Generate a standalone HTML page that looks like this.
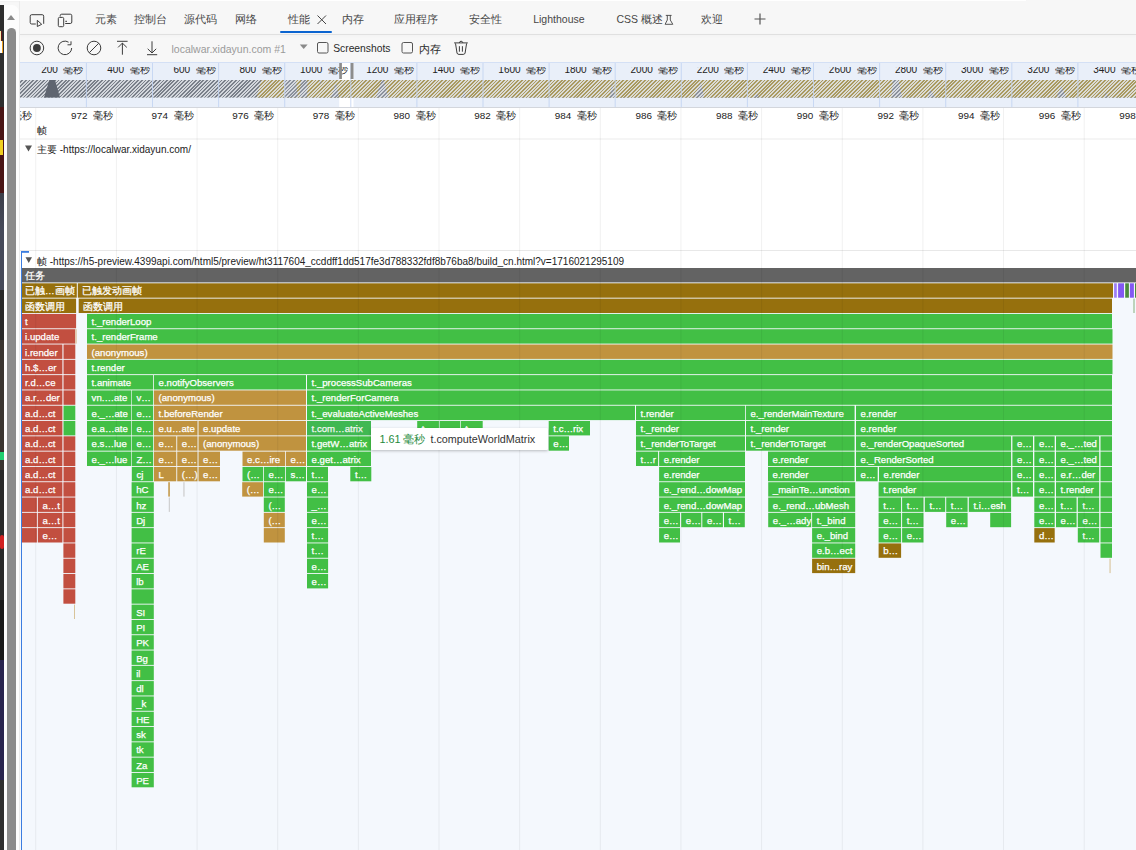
<!DOCTYPE html>
<html><head><meta charset="utf-8"><style>
*{box-sizing:border-box}
body{margin:0;width:1136px;height:850px;overflow:hidden;position:relative;background:#f7f7f7;font-family:"Liberation Sans",sans-serif}
.a{position:absolute}
.tab{position:absolute;top:12.2px;font-size:10.5px;color:#474747;line-height:14px;white-space:nowrap}
</style></head><body>
<div class="a" style="left:0;top:0;width:1026px;height:1.3px;background:#fff;box-shadow:0 0.5px 1.5px rgba(0,0,0,0.05)"></div>
<div class="a" style="left:0;top:5px;width:3.8px;height:845px;background:linear-gradient(#2e2e2e 0,#2e2e2e 102px,#4a1515 102px,#4a1515 188px,#3d3f4a 188px,#464a5a 225px,#464a5a 285px,#2a2a2a 285px,#2a2a2a 335px,#3a3530 335px,#3a3530 465px,#2a2a2a 465px,#2a2a2a 595px,#1a1a1a 595px,#1a1a1a 655px,#2a2550 655px,#2a2550 775px,#2e2e2e 775px)"></div>
<div class="a" style="left:0;top:140px;width:3px;height:15px;background:#f0d020"></div>
<div class="a" style="left:0;top:31px;width:2px;height:9.5px;background:#fdf0b0;border-right:1.2px solid #6a1a1a"></div>
<div class="a" style="left:0;top:41px;width:3px;height:12px;background:linear-gradient(90deg,#fff 0,#fff 1.8px,#f0a020 1.8px)"></div>
<div class="a" style="left:0;top:452px;width:3.8px;height:8px;background:#20d070"></div>
<div class="a" style="left:0;top:535px;width:3.5px;height:14px;background:#d02020;border-radius:2px"></div>
<div class="a" style="left:3.8px;top:4.6px;width:15.4px;height:846px;background:#fdfdfd;border-top-right-radius:7px"></div>
<div class="a" style="left:6.7px;top:14.8px;width:0;height:0;border-left:4.75px solid transparent;border-right:4.75px solid transparent;border-bottom:5.3px solid #8a8a8a"></div>
<div class="a" style="left:7px;top:28px;width:9px;height:830px;background:#8b8b8b;border-radius:4.5px 4.5px 0 0"></div>
<div class="a" style="left:19px;top:1.3px;width:1117px;height:848.7px;background:#f7f7f7;border-left:1px solid #ebebeb"></div>
<!-- tab bar -->
<div class="a" style="left:20px;top:33.5px;width:1116px;height:1px;background:#e0e0e0;box-shadow:0 1px 3px rgba(0,0,0,0.05)"></div>
<span class="tab" style="left:94.6px">元素</span>
<span class="tab" style="left:134.2px">控制台</span>
<span class="tab" style="left:184.4px">源代码</span>
<span class="tab" style="left:234.7px">网络</span>
<span class="tab" style="left:288.4px">性能</span>
<span class="tab" style="left:342.1px">内存</span>
<span class="tab" style="left:394px">应用程序</span>
<span class="tab" style="left:468.5px">安全性</span>
<span class="tab" style="left:533.2px">Lighthouse</span>
<span class="tab" style="left:616.5px">CSS 概述</span>
<span class="tab" style="left:700.5px">欢迎</span>
<div class="a" style="left:279.6px;top:31px;width:52.8px;height:2px;background:#0b64d0;border-radius:1px"></div>
<svg class="a" style="left:0;top:0" width="800" height="62" fill="none" stroke="#3c3c3c" stroke-width="1">
 <path d="M35.8 24 H31.7 a1.5 1.5 0 0 1 -1.5 -1.5 V16.2 a1.5 1.5 0 0 1 1.5 -1.5 H42.2 a1.5 1.5 0 0 1 1.5 1.5 V23.8"/>
 <path d="M37.3 20.3 L37.3 26.5 L41.7 24.3 Z" stroke-linejoin="round"/>
 <rect x="58.3" y="17.4" width="5.4" height="9.3" rx="1.2"/>
 <path d="M60.2 16.5 V15.7 a1.5 1.5 0 0 1 1.5 -1.5 H70.3 a1.5 1.5 0 0 1 1.5 1.5 V22 a1.5 1.5 0 0 1 -1.5 1.5 H65.2"/><path d="M65.3 21.3 H67"/>
 <path d="M317.5 15.5 L326 24 M326 15.5 L317.5 24" stroke="#444" stroke-width="1"/>
 <path d="M665.8 15.4 H671.6 M667.3 15.4 V20 L665.1 24.3 H672.8 L670.3 20 V15.4" stroke="#444" stroke-width="0.9"/>
 <path d="M754.5 19 H765.5 M760 13.5 V24.5" stroke="#555" stroke-width="1.2"/>
 <!-- toolbar -->
 <circle cx="36.9" cy="48" r="6.8"/><circle cx="36.9" cy="48" r="3.9" fill="#3c3c3c" stroke="none"/>
 <path d="M71.7 48 A6.8 6.8 0 1 1 68.6 42.2"/><path d="M71 41.3 V44.8 H67.5"/>
 <circle cx="94" cy="48" r="6.8"/><path d="M89.3 52.7 L98.7 43.3"/>
 <path d="M117 41.3 H127.6 M122.4 43 V54.7 M118.1 47.4 L122.4 43.1 L126.8 47.4"/>
 <path d="M147 54.7 H157.2 M152 41.3 V52.8 M147.7 48.8 L152 53 L156.2 48.8"/>
 <path d="M299.8 44.5 H307.6 L303.7 49 Z" fill="#8a8a8a" stroke="none"/>
 <rect x="317.5" y="42.5" width="10.5" height="10.5" rx="1.5" stroke="#555"/>
 <rect x="402" y="42.5" width="10.5" height="10.5" rx="1.5" stroke="#555"/>
 <path d="M454.1 42.9 H467.8 M459.3 42.9 A1.85 2.2 0 0 1 462.9 42.9 M455.5 43.4 L457 53 Q457.3 54.4 459 54.4 H463.2 Q464.8 54.4 465.1 53 L466.6 43.4 M459.4 46.2 V51.7 M462.4 46.2 V51.7"/>
</svg>
<span class="a" style="left:171.5px;top:41.6px;font-size:10.5px;color:#9a9a9a;line-height:14px;white-space:nowrap">localwar.xidayun.com #1</span>
<span class="a" style="left:333.2px;top:41.6px;font-size:10.3px;color:#2a2a2a;line-height:14px;white-space:nowrap">Screenshots</span>
<span class="a" style="left:418.6px;top:41.6px;font-size:10.8px;color:#2a2a2a;line-height:14px;white-space:nowrap">内存</span>
<!-- overview -->
<div class="a" style="left:20px;top:62px;width:1116px;height:46px;background:#e9eff9;border-top:1px solid #d4e0f5;border-bottom:1.5px solid #d3d6dc"></div>
<div class="a" style="left:20px;top:108px;width:1116px;height:742px;background:#fff"></div>
<svg class="a" style="left:0;top:0" width="1136" height="108">
 <rect x="339.2" y="63" width="14.3" height="17" fill="#fff"/><rect x="339.2" y="97.6" width="14.3" height="9.4" fill="#fff"/>
 <rect x="20" y="80" width="1116" height="17.6" fill="#7a808a"/>
 <path d="M261.3 80 H1136 V97.6 H256.6 Z" fill="#a99a60"/>
 <path fill="#8b919c" d="M283.5 80 L296 80 L298 97.6 L285 97.6 Z M301 80 L307.3 80 L307.3 97.6 L299.4 97.6 Z M319 80 L322 80 L320.5 84 Z M331 97.6 L336 82 L339 97.6 Z M375.8 97.6 L381.7 80 L383.6 80 L388.4 97.6 Z M462 97.6 L464 90 L466 97.6 Z M609.8 97.6 L612 82 L615 97.6 Z M694 97.6 L701 82 L704 97.6 Z M754 97.6 L756.5 93 L759 97.6 Z M892.7 80 L898.5 80 L902.2 97.6 L891.4 97.6 Z M927.5 97.6 L930.2 89 L935 97.6 Z M1056.5 97.6 L1061 86 L1066.6 97.6 Z M1104 97.6 L1106 92 L1108 97.6 Z"/>
</svg>
<div class="a" style="left:20px;top:80px;width:1116px;height:17.6px;background:repeating-linear-gradient(135deg,rgba(230,233,238,0.82) 0,rgba(230,233,238,0.82) 1.35px,transparent 1.35px,transparent 2.56px)"></div>
<svg class="a" style="left:0;top:0" width="1136" height="850">
 <defs>
  <clipPath id="txclip"><rect x="20" y="67.1" width="1116" height="40"/></clipPath><clipPath id="rclip"><rect x="20" y="100" width="1116" height="40"/></clipPath>
 </defs>
 <rect x="85.9" y="63" width="1" height="44" fill="#c2d4f2" fill-opacity="0.85"/><rect x="152" y="63" width="1" height="44" fill="#c2d4f2" fill-opacity="0.85"/><rect x="218.1" y="63" width="1" height="44" fill="#c2d4f2" fill-opacity="0.85"/><rect x="284.2" y="63" width="1" height="44" fill="#c2d4f2" fill-opacity="0.85"/><rect x="350.3" y="63" width="1" height="44" fill="#c2d4f2" fill-opacity="0.85"/><rect x="416.4" y="63" width="1" height="44" fill="#c2d4f2" fill-opacity="0.85"/><rect x="482.5" y="63" width="1" height="44" fill="#c2d4f2" fill-opacity="0.85"/><rect x="548.6" y="63" width="1" height="44" fill="#c2d4f2" fill-opacity="0.85"/><rect x="614.7" y="63" width="1" height="44" fill="#c2d4f2" fill-opacity="0.85"/><rect x="680.8" y="63" width="1" height="44" fill="#c2d4f2" fill-opacity="0.85"/><rect x="746.9" y="63" width="1" height="44" fill="#c2d4f2" fill-opacity="0.85"/><rect x="813" y="63" width="1" height="44" fill="#c2d4f2" fill-opacity="0.85"/><rect x="879.1" y="63" width="1" height="44" fill="#c2d4f2" fill-opacity="0.85"/><rect x="945.2" y="63" width="1" height="44" fill="#c2d4f2" fill-opacity="0.85"/><rect x="1011.3" y="63" width="1" height="44" fill="#c2d4f2" fill-opacity="0.85"/><rect x="1077.4" y="63" width="1" height="44" fill="#c2d4f2" fill-opacity="0.85"/><rect x="1143.5" y="63" width="1" height="44" fill="#c2d4f2" fill-opacity="0.85"/>
 <path d="M44 97.6 L49.3 80 L55 80 L60 97.6 Z" fill="#5f6570"/>
 <g clip-path="url(#txclip)" font-family="Liberation Sans, sans-serif" font-size="10" fill="#222"><text x="83.4" y="73.4" text-anchor="end">200<tspan dx="5.5">毫秒</tspan></text><text x="149.5" y="73.4" text-anchor="end">400<tspan dx="5.5">毫秒</tspan></text><text x="215.6" y="73.4" text-anchor="end">600<tspan dx="5.5">毫秒</tspan></text><text x="281.7" y="73.4" text-anchor="end">800<tspan dx="5.5">毫秒</tspan></text><text x="347.8" y="73.4" text-anchor="end">1000<tspan dx="5.5">毫秒</tspan></text><text x="413.9" y="73.4" text-anchor="end">1200<tspan dx="5.5">毫秒</tspan></text><text x="480" y="73.4" text-anchor="end">1400<tspan dx="5.5">毫秒</tspan></text><text x="546.1" y="73.4" text-anchor="end">1600<tspan dx="5.5">毫秒</tspan></text><text x="612.2" y="73.4" text-anchor="end">1800<tspan dx="5.5">毫秒</tspan></text><text x="678.3" y="73.4" text-anchor="end">2000<tspan dx="5.5">毫秒</tspan></text><text x="744.4" y="73.4" text-anchor="end">2200<tspan dx="5.5">毫秒</tspan></text><text x="810.5" y="73.4" text-anchor="end">2400<tspan dx="5.5">毫秒</tspan></text><text x="876.6" y="73.4" text-anchor="end">2600<tspan dx="5.5">毫秒</tspan></text><text x="942.7" y="73.4" text-anchor="end">2800<tspan dx="5.5">毫秒</tspan></text><text x="1008.8" y="73.4" text-anchor="end">3000<tspan dx="5.5">毫秒</tspan></text><text x="1074.9" y="73.4" text-anchor="end">3200<tspan dx="5.5">毫秒</tspan></text><text x="1141" y="73.4" text-anchor="end">3400<tspan dx="5.5">毫秒</tspan></text></g>
 <rect x="339.2" y="63" width="2.7" height="16" fill="#8c8c8c"/>
 <rect x="350.6" y="63" width="2.9" height="16" fill="#8c8c8c"/>
 <g clip-path="url(#rclip)" font-family="Liberation Sans, sans-serif" font-size="9.9" fill="#222"><text x="32.25" y="118.5" text-anchor="end">970<tspan dx="5.5">毫秒</tspan></text><text x="112.9" y="118.5" text-anchor="end">972<tspan dx="5.5">毫秒</tspan></text><text x="193.55" y="118.5" text-anchor="end">974<tspan dx="5.5">毫秒</tspan></text><text x="274.2" y="118.5" text-anchor="end">976<tspan dx="5.5">毫秒</tspan></text><text x="354.85" y="118.5" text-anchor="end">978<tspan dx="5.5">毫秒</tspan></text><text x="435.5" y="118.5" text-anchor="end">980<tspan dx="5.5">毫秒</tspan></text><text x="516.15" y="118.5" text-anchor="end">982<tspan dx="5.5">毫秒</tspan></text><text x="596.8" y="118.5" text-anchor="end">984<tspan dx="5.5">毫秒</tspan></text><text x="677.45" y="118.5" text-anchor="end">986<tspan dx="5.5">毫秒</tspan></text><text x="758.1" y="118.5" text-anchor="end">988<tspan dx="5.5">毫秒</tspan></text><text x="838.75" y="118.5" text-anchor="end">990<tspan dx="5.5">毫秒</tspan></text><text x="919.4" y="118.5" text-anchor="end">992<tspan dx="5.5">毫秒</tspan></text><text x="1000.05" y="118.5" text-anchor="end">994<tspan dx="5.5">毫秒</tspan></text><text x="1080.7" y="118.5" text-anchor="end">996<tspan dx="5.5">毫秒</tspan></text><text x="1161.35" y="118.5" text-anchor="end">998<tspan dx="5.5">毫秒</tspan></text></g>
 <text x="37" y="133.5" font-family="Liberation Sans, sans-serif" font-size="10" fill="#222">帧</text>
 <rect x="20" y="138.5" width="1116" height="1" fill="#ececec"/>
 <path d="M25 145.5 H32 L28.5 151.5 Z" fill="#555"/>
 <text x="37" y="153" font-family="Liberation Sans, sans-serif" font-size="10" fill="#222">主要 -https://localwar.xidayun.com/</text>
 <rect x="20" y="250" width="1116" height="1" fill="#e8e8e8"/>
 <rect x="20" y="268" width="1116" height="582" fill="#f4f8fd"/>
 <path d="M25.5 257.2 H32 L28.75 263 Z" fill="#555"/>
 <text x="37" y="264.7" font-family="Liberation Sans, sans-serif" font-size="10" fill="#222">帧 -https://h5-preview.4399api.com/html5/preview/ht3117604_ccddff1dd517fe3d788332fdf8b76ba8/build_cn.html?v=1716021295109</text>
 <rect x="21" y="251" width="1" height="599" fill="#3b7de0"/>
 <rect x="21" y="251" width="8" height="1.8" fill="#3b7de0"/>
</svg>
<svg width="1136" height="850" style="position:absolute;left:0;top:0">
<g><rect x="22" y="268" width="1114" height="14.4" fill="#636363"/><rect x="22" y="283.3" width="54.8" height="14.4" fill="#96700d"/><rect x="77.8" y="283.3" width="1035.2" height="14.4" fill="#96700d"/><rect x="1114.1" y="283.3" width="2.7" height="14.4" fill="#9d7ef5"/><rect x="1118.1" y="283.3" width="5.9" height="14.4" fill="#8358f2"/><rect x="1125.2" y="283.3" width="3.7" height="14.4" fill="#4d8c3c"/><rect x="1129.9" y="283.3" width="4" height="14.4" fill="#8358f2"/><rect x="1135" y="283.3" width="1" height="14.4" fill="#4d8c3c"/><rect x="22" y="298.6" width="54.1" height="14.4" fill="#96700d"/><rect x="78.7" y="298.6" width="1033.3" height="14.4" fill="#96700d"/><rect x="1133.3" y="298.6" width="1.4" height="14.4" fill="#a5c4a0"/><rect x="22" y="313.9" width="54.1" height="14.4" fill="#c24f40"/><rect x="87" y="313.9" width="1025" height="14.4" fill="#42bf45"/><rect x="22" y="329.2" width="53.3" height="14.4" fill="#c24f40"/><rect x="75.3" y="329.2" width="1.5" height="14.4" fill="#e0c8a8"/><rect x="87" y="329.2" width="1025.5" height="14.4" fill="#42bf45"/><rect x="22" y="344.5" width="40.4" height="14.4" fill="#c24f40"/><rect x="63.5" y="344.5" width="11.8" height="14.4" fill="#c24f40"/><rect x="87" y="344.5" width="1025.5" height="14.4" fill="#c0933f"/><rect x="22" y="359.8" width="40.4" height="14.4" fill="#c24f40"/><rect x="63.5" y="359.8" width="11.8" height="14.4" fill="#c24f40"/><rect x="87" y="359.8" width="1025.5" height="14.4" fill="#42bf45"/><rect x="22" y="375.1" width="40.4" height="14.4" fill="#c24f40"/><rect x="63.5" y="375.1" width="11.8" height="14.4" fill="#c24f40"/><rect x="87" y="375.1" width="66.2" height="14.4" fill="#42bf45"/><rect x="154" y="375.1" width="152" height="14.4" fill="#42bf45"/><rect x="307" y="375.1" width="805" height="14.4" fill="#42bf45"/><rect x="22" y="390.4" width="40.4" height="14.4" fill="#c24f40"/><rect x="63.5" y="390.4" width="11.8" height="14.4" fill="#c24f40"/><rect x="87" y="390.4" width="44.2" height="14.4" fill="#42bf45"/><rect x="131.8" y="390.4" width="21.4" height="14.4" fill="#42bf45"/><rect x="154" y="390.4" width="152" height="14.4" fill="#c0933f"/><rect x="307" y="390.4" width="805" height="14.4" fill="#42bf45"/><rect x="22" y="405.7" width="40.4" height="14.4" fill="#c24f40"/><rect x="63.5" y="405.7" width="11.8" height="14.4" fill="#42bf45"/><rect x="87" y="405.7" width="44.2" height="14.4" fill="#42bf45"/><rect x="131.8" y="405.7" width="21.4" height="14.4" fill="#42bf45"/><rect x="154" y="405.7" width="152" height="14.4" fill="#c0933f"/><rect x="307" y="405.7" width="328" height="14.4" fill="#42bf45"/><rect x="636" y="405.7" width="109" height="14.4" fill="#42bf45"/><rect x="745.8" y="405.7" width="108.8" height="14.4" fill="#42bf45"/><rect x="856" y="405.7" width="256" height="14.4" fill="#42bf45"/><rect x="22" y="421" width="40.4" height="14.4" fill="#c24f40"/><rect x="63.5" y="421" width="11.8" height="14.4" fill="#42bf45"/><rect x="87" y="421" width="44.2" height="14.4" fill="#42bf45"/><rect x="131.8" y="421" width="21.4" height="14.4" fill="#42bf45"/><rect x="154" y="421" width="43.5" height="14.4" fill="#c0933f"/><rect x="198.5" y="421" width="107.5" height="14.4" fill="#c0933f"/><rect x="307" y="421" width="64" height="14.4" fill="#40b852"/><rect x="417.2" y="421" width="21.7" height="14.4" fill="#42bf45"/><rect x="439.6" y="421" width="20.4" height="14.4" fill="#42bf45"/><rect x="460.7" y="421" width="22" height="14.4" fill="#42bf45"/><rect x="548.7" y="421" width="41.3" height="14.4" fill="#42bf45"/><rect x="636" y="421" width="109" height="14.4" fill="#42bf45"/><rect x="746" y="421" width="108.6" height="14.4" fill="#42bf45"/><rect x="856" y="421" width="256" height="14.4" fill="#42bf45"/><rect x="22" y="436.3" width="40.4" height="14.4" fill="#c24f40"/><rect x="63.5" y="436.3" width="11.8" height="14.4" fill="#c24f40"/><rect x="87" y="436.3" width="44.2" height="14.4" fill="#42bf45"/><rect x="131.8" y="436.3" width="21.4" height="14.4" fill="#42bf45"/><rect x="154" y="436.3" width="22.3" height="14.4" fill="#c0933f"/><rect x="177.2" y="436.3" width="20.3" height="14.4" fill="#c0933f"/><rect x="198.5" y="436.3" width="107.5" height="14.4" fill="#c0933f"/><rect x="307" y="436.3" width="64" height="14.4" fill="#42bf45"/><rect x="548.7" y="436.3" width="20.3" height="14.4" fill="#42bf45"/><rect x="636" y="436.3" width="109" height="14.4" fill="#42bf45"/><rect x="746" y="436.3" width="108.6" height="14.4" fill="#42bf45"/><rect x="856" y="436.3" width="155.1" height="14.4" fill="#42bf45"/><rect x="1012.4" y="436.3" width="20.6" height="14.4" fill="#42bf45"/><rect x="1034.3" y="436.3" width="20.4" height="14.4" fill="#42bf45"/><rect x="1056" y="436.3" width="43.2" height="14.4" fill="#42bf45"/><rect x="1100.5" y="436.3" width="11.5" height="14.4" fill="#42bf45"/><rect x="22" y="451.6" width="40.4" height="14.4" fill="#c24f40"/><rect x="63.5" y="451.6" width="11.8" height="14.4" fill="#c24f40"/><rect x="87" y="451.6" width="44.2" height="14.4" fill="#42bf45"/><rect x="131.8" y="451.6" width="21.4" height="14.4" fill="#42bf45"/><rect x="154" y="451.6" width="22.3" height="14.4" fill="#c0933f"/><rect x="177.2" y="451.6" width="20.3" height="14.4" fill="#c0933f"/><rect x="198.5" y="451.6" width="21.5" height="14.4" fill="#c0933f"/><rect x="242.5" y="451.6" width="42.5" height="14.4" fill="#c0933f"/><rect x="285.8" y="451.6" width="20.2" height="14.4" fill="#c0933f"/><rect x="307" y="451.6" width="64" height="14.4" fill="#42bf45"/><rect x="636" y="451.6" width="22.1" height="14.4" fill="#42bf45"/><rect x="659.1" y="451.6" width="85.9" height="14.4" fill="#42bf45"/><rect x="768" y="451.6" width="86.6" height="14.4" fill="#42bf45"/><rect x="856" y="451.6" width="155.1" height="14.4" fill="#42bf45"/><rect x="1012.4" y="451.6" width="20.6" height="14.4" fill="#42bf45"/><rect x="1034.3" y="451.6" width="20.4" height="14.4" fill="#42bf45"/><rect x="1056" y="451.6" width="43.2" height="14.4" fill="#42bf45"/><rect x="1100.5" y="451.6" width="11.5" height="14.4" fill="#42bf45"/><rect x="22" y="466.9" width="40.4" height="14.4" fill="#c24f40"/><rect x="63.5" y="466.9" width="11.8" height="14.4" fill="#c24f40"/><rect x="131.8" y="466.9" width="21.4" height="14.4" fill="#42bf45"/><rect x="154" y="466.9" width="22.3" height="14.4" fill="#c0933f"/><rect x="177.2" y="466.9" width="20.3" height="14.4" fill="#c0933f"/><rect x="198.5" y="466.9" width="21.5" height="14.4" fill="#c0933f"/><rect x="242.5" y="466.9" width="20.5" height="14.4" fill="#42bf45"/><rect x="263.8" y="466.9" width="21.2" height="14.4" fill="#42bf45"/><rect x="285.8" y="466.9" width="20.2" height="14.4" fill="#42bf45"/><rect x="307" y="466.9" width="21" height="14.4" fill="#42bf45"/><rect x="350.3" y="466.9" width="21" height="14.4" fill="#42bf45"/><rect x="659.1" y="466.9" width="85.9" height="14.4" fill="#42bf45"/><rect x="768" y="466.9" width="86.6" height="14.4" fill="#42bf45"/><rect x="856" y="466.9" width="21.7" height="14.4" fill="#42bf45"/><rect x="879" y="466.9" width="132.1" height="14.4" fill="#42bf45"/><rect x="1012.4" y="466.9" width="20.6" height="14.4" fill="#42bf45"/><rect x="1034.3" y="466.9" width="20.4" height="14.4" fill="#42bf45"/><rect x="1056" y="466.9" width="43.2" height="14.4" fill="#42bf45"/><rect x="1100.5" y="466.9" width="11.5" height="14.4" fill="#42bf45"/><rect x="22" y="482.2" width="40.4" height="14.4" fill="#c24f40"/><rect x="63.4" y="482.2" width="11.9" height="14.4" fill="#c24f40"/><rect x="131.6" y="482.2" width="22.2" height="14.4" fill="#42bf45"/><rect x="168.3" y="482.2" width="1.5" height="14.4" fill="#c0933f"/><rect x="183.4" y="482.2" width="1.1" height="14.4" fill="#c8c8c8"/><rect x="242.2" y="482.2" width="20.8" height="14.4" fill="#c0933f"/><rect x="263.8" y="482.2" width="21" height="14.4" fill="#42bf45"/><rect x="307" y="482.2" width="21.1" height="14.4" fill="#42bf45"/><rect x="659.1" y="482.2" width="85.9" height="14.4" fill="#42bf45"/><rect x="768.2" y="482.2" width="87" height="14.4" fill="#42bf45"/><rect x="878.6" y="482.2" width="132.5" height="14.4" fill="#42bf45"/><rect x="1012.4" y="482.2" width="20.6" height="14.4" fill="#42bf45"/><rect x="1034.3" y="482.2" width="20.4" height="14.4" fill="#42bf45"/><rect x="1056" y="482.2" width="43.2" height="14.4" fill="#42bf45"/><rect x="1100.5" y="482.2" width="11.5" height="14.4" fill="#42bf45"/><rect x="22" y="497.5" width="14.9" height="14.4" fill="#c24f40"/><rect x="37.8" y="497.5" width="24.6" height="14.4" fill="#c24f40"/><rect x="63.4" y="497.5" width="11.9" height="14.4" fill="#c24f40"/><rect x="131.6" y="497.5" width="22.2" height="14.4" fill="#42bf45"/><rect x="168.8" y="497.5" width="1" height="14.4" fill="#c8c8c8"/><rect x="263.8" y="497.5" width="21" height="14.4" fill="#42bf45"/><rect x="307" y="497.5" width="21.1" height="14.4" fill="#42bf45"/><rect x="659.1" y="497.5" width="85.9" height="14.4" fill="#42bf45"/><rect x="768.2" y="497.5" width="87" height="14.4" fill="#42bf45"/><rect x="878.6" y="497.5" width="22.5" height="14.4" fill="#42bf45"/><rect x="902.1" y="497.5" width="21.4" height="14.4" fill="#42bf45"/><rect x="924.8" y="497.5" width="20.4" height="14.4" fill="#42bf45"/><rect x="946.2" y="497.5" width="21.4" height="14.4" fill="#42bf45"/><rect x="968.8" y="497.5" width="42.3" height="14.4" fill="#42bf45"/><rect x="1034.3" y="497.5" width="20.4" height="14.4" fill="#42bf45"/><rect x="1056" y="497.5" width="20.6" height="14.4" fill="#42bf45"/><rect x="1077.8" y="497.5" width="21.4" height="14.4" fill="#42bf45"/><rect x="1100.5" y="497.5" width="11.5" height="14.4" fill="#42bf45"/><rect x="22" y="512.8" width="14.9" height="14.4" fill="#c24f40"/><rect x="37.8" y="512.8" width="24.6" height="14.4" fill="#c24f40"/><rect x="63.4" y="512.8" width="11.9" height="14.4" fill="#c24f40"/><rect x="131.6" y="512.8" width="22.2" height="14.4" fill="#42bf45"/><rect x="263.8" y="512.8" width="21" height="14.4" fill="#c0933f"/><rect x="307" y="512.8" width="21.1" height="14.4" fill="#42bf45"/><rect x="659.1" y="512.8" width="20.9" height="14.4" fill="#42bf45"/><rect x="681.2" y="512.8" width="20.1" height="14.4" fill="#42bf45"/><rect x="702.3" y="512.8" width="20.6" height="14.4" fill="#42bf45"/><rect x="724" y="512.8" width="20.8" height="14.4" fill="#42bf45"/><rect x="768.2" y="512.8" width="43" height="14.4" fill="#42bf45"/><rect x="812.1" y="512.8" width="43.1" height="14.4" fill="#42bf45"/><rect x="878.6" y="512.8" width="22.5" height="14.4" fill="#42bf45"/><rect x="902.1" y="512.8" width="21.4" height="14.4" fill="#42bf45"/><rect x="946.2" y="512.8" width="21.4" height="14.4" fill="#42bf45"/><rect x="990.2" y="512.8" width="20.9" height="14.4" fill="#42bf45"/><rect x="1034.3" y="512.8" width="20.4" height="14.4" fill="#42bf45"/><rect x="1056" y="512.8" width="20.6" height="14.4" fill="#42bf45"/><rect x="1077.8" y="512.8" width="21.4" height="14.4" fill="#42bf45"/><rect x="1100.5" y="512.8" width="11.5" height="14.4" fill="#42bf45"/><rect x="22" y="528.1" width="14.9" height="14.4" fill="#c24f40"/><rect x="37.8" y="528.1" width="24.6" height="14.4" fill="#c24f40"/><rect x="63.4" y="528.1" width="11.9" height="14.4" fill="#c24f40"/><rect x="131.6" y="528.1" width="22.2" height="14.4" fill="#42bf45"/><rect x="263.8" y="528.1" width="21" height="14.4" fill="#c0933f"/><rect x="307" y="528.1" width="21.1" height="14.4" fill="#42bf45"/><rect x="659.1" y="528.1" width="20.9" height="14.4" fill="#42bf45"/><rect x="812.1" y="528.1" width="43.1" height="14.4" fill="#42bf45"/><rect x="878.6" y="528.1" width="22.5" height="14.4" fill="#42bf45"/><rect x="902.1" y="528.1" width="21.4" height="14.4" fill="#42bf45"/><rect x="1034.3" y="528.1" width="20.4" height="14.4" fill="#96700d"/><rect x="1077.8" y="528.1" width="21.4" height="14.4" fill="#42bf45"/><rect x="1100.5" y="528.1" width="11.5" height="14.4" fill="#42bf45"/><rect x="63.4" y="543.4" width="11.9" height="14.4" fill="#c24f40"/><rect x="131.6" y="543.4" width="22.2" height="14.4" fill="#42bf45"/><rect x="307" y="543.4" width="21.1" height="14.4" fill="#42bf45"/><rect x="812.1" y="543.4" width="43.1" height="14.4" fill="#42bf45"/><rect x="878.6" y="543.4" width="22.5" height="14.4" fill="#96700d"/><rect x="1100.5" y="543.4" width="11.5" height="14.4" fill="#42bf45"/><rect x="63.4" y="558.7" width="11.9" height="14.4" fill="#c24f40"/><rect x="131.6" y="558.7" width="22.2" height="14.4" fill="#42bf45"/><rect x="307" y="558.7" width="21.1" height="14.4" fill="#42bf45"/><rect x="812.1" y="558.7" width="43.1" height="14.4" fill="#96700d"/><rect x="1109.5" y="558.7" width="1.1" height="14.4" fill="#d8c49a"/><rect x="63.4" y="574" width="11.9" height="14.4" fill="#c24f40"/><rect x="131.6" y="574" width="22.2" height="14.4" fill="#42bf45"/><rect x="307" y="574" width="21.1" height="14.4" fill="#42bf45"/><rect x="63.4" y="589.3" width="11.9" height="14.4" fill="#c24f40"/><rect x="131.6" y="589.3" width="22.2" height="14.4" fill="#42bf45"/><rect x="74" y="604.6" width="1" height="14.4" fill="#d8c49a"/><rect x="131.6" y="604.6" width="22.2" height="14.4" fill="#42bf45"/><rect x="131.6" y="619.9" width="22.2" height="14.4" fill="#42bf45"/><rect x="131.6" y="635.2" width="22.2" height="14.4" fill="#42bf45"/><rect x="131.6" y="650.5" width="22.2" height="14.4" fill="#42bf45"/><rect x="131.6" y="665.8" width="22.2" height="14.4" fill="#42bf45"/><rect x="131.6" y="681.1" width="22.2" height="14.4" fill="#42bf45"/><rect x="131.6" y="696.4" width="22.2" height="14.4" fill="#42bf45"/><rect x="131.6" y="711.7" width="22.2" height="14.4" fill="#42bf45"/><rect x="131.6" y="727" width="22.2" height="14.4" fill="#42bf45"/><rect x="131.6" y="742.3" width="22.2" height="14.4" fill="#42bf45"/><rect x="131.6" y="757.6" width="22.2" height="14.4" fill="#42bf45"/><rect x="131.6" y="772.9" width="22.2" height="14.4" fill="#42bf45"/></g>
<g font-family="Liberation Sans, sans-serif" font-size="9.6" stroke="#fff" stroke-width="0.25"><text x="25.1" y="279" fill="#fff">任务</text><text x="25.1" y="294.3" fill="#fff">已触…画帧</text><text x="82.4" y="294.3" fill="#fff">已触发动画帧</text><text x="25.1" y="309.6" fill="#fff">函数调用</text><text x="83.3" y="309.6" fill="#fff">函数调用</text><text x="25.1" y="324.9" fill="#fff">t</text><text x="91.6" y="324.9" fill="#fff">t._renderLoop</text><text x="25.1" y="340.2" fill="#fff">i.update</text><text x="91.6" y="340.2" fill="#fff">t._renderFrame</text><text x="25.1" y="355.5" fill="#fff">i.render</text><text x="91.6" y="355.5" fill="#fff">(anonymous)</text><text x="25.1" y="370.8" fill="#fff">h.$…er</text><text x="91.6" y="370.8" fill="#fff">t.render</text><text x="25.1" y="386.1" fill="#fff">r.d…ce</text><text x="91.6" y="386.1" fill="#fff">t.animate</text><text x="158.6" y="386.1" fill="#fff">e.notifyObservers</text><text x="311.6" y="386.1" fill="#fff">t._processSubCameras</text><text x="25.1" y="401.4" fill="#fff">a.r…der</text><text x="91.6" y="401.4" fill="#fff">vn.…ate</text><text x="136.4" y="401.4" fill="#fff">v…</text><text x="158.6" y="401.4" fill="#fff">(anonymous)</text><text x="311.6" y="401.4" fill="#fff">t._renderForCamera</text><text x="25.1" y="416.7" fill="#fff">a.d…ct</text><text x="91.6" y="416.7" fill="#fff">e._…ate</text><text x="136.4" y="416.7" fill="#fff">e…</text><text x="158.6" y="416.7" fill="#fff">t.beforeRender</text><text x="311.6" y="416.7" fill="#fff">t._evaluateActiveMeshes</text><text x="640.6" y="416.7" fill="#fff">t.render</text><text x="750.4" y="416.7" fill="#fff">e._renderMainTexture</text><text x="860.6" y="416.7" fill="#fff">e.render</text><text x="25.1" y="432" fill="#fff">a.d…ct</text><text x="91.6" y="432" fill="#fff">e.a…ate</text><text x="136.4" y="432" fill="#fff">e…</text><text x="158.6" y="432" fill="#fff">e.u…ate</text><text x="203.1" y="432" fill="#fff">e.update</text><text x="311.6" y="432" fill="#e2ebe2">t.com…atrix</text><text x="421.8" y="432" fill="#fff">t…</text><text x="465.3" y="432" fill="#fff">t…</text><text x="553.3" y="432" fill="#fff">t.c…rix</text><text x="640.6" y="432" fill="#fff">t._render</text><text x="750.6" y="432" fill="#fff">t._render</text><text x="860.6" y="432" fill="#fff">e.render</text><text x="25.1" y="447.3" fill="#fff">a.d…ct</text><text x="91.6" y="447.3" fill="#fff">e.s…lue</text><text x="136.4" y="447.3" fill="#fff">e…</text><text x="158.6" y="447.3" fill="#fff">e…</text><text x="181.8" y="447.3" fill="#fff">e…</text><text x="203.1" y="447.3" fill="#fff">(anonymous)</text><text x="311.6" y="447.3" fill="#fff">t.getW…atrix</text><text x="553.3" y="447.3" fill="#fff">e…</text><text x="640.6" y="447.3" fill="#fff">t._renderToTarget</text><text x="750.6" y="447.3" fill="#fff">t._renderToTarget</text><text x="860.6" y="447.3" fill="#fff">e._renderOpaqueSorted</text><text x="1017" y="447.3" fill="#fff">e…</text><text x="1038.9" y="447.3" fill="#fff">e…</text><text x="1060.6" y="447.3" fill="#fff">e._…ted</text><text x="25.1" y="462.6" fill="#fff">a.d…ct</text><text x="91.6" y="462.6" fill="#fff">e._…lue</text><text x="136.4" y="462.6" fill="#fff">Z…</text><text x="158.6" y="462.6" fill="#fff">e…</text><text x="181.8" y="462.6" fill="#fff">e…</text><text x="203.1" y="462.6" fill="#fff">e…</text><text x="247.1" y="462.6" fill="#fff">e.c…ire</text><text x="290.4" y="462.6" fill="#fff">e…</text><text x="311.6" y="462.6" fill="#fff">e.get…atrix</text><text x="640.6" y="462.6" fill="#fff">t…r</text><text x="663.7" y="462.6" fill="#fff">e.render</text><text x="772.6" y="462.6" fill="#fff">e.render</text><text x="860.6" y="462.6" fill="#fff">e._RenderSorted</text><text x="1017" y="462.6" fill="#fff">e…</text><text x="1038.9" y="462.6" fill="#fff">e…</text><text x="1060.6" y="462.6" fill="#fff">e._…ted</text><text x="25.1" y="477.9" fill="#fff">a.d…ct</text><text x="136.4" y="477.9" fill="#fff">cj</text><text x="158.6" y="477.9" fill="#fff">L</text><text x="181.8" y="477.9" fill="#fff">(…)</text><text x="203.1" y="477.9" fill="#fff">e…</text><text x="247.1" y="477.9" fill="#fff">(…</text><text x="268.4" y="477.9" fill="#fff">e…</text><text x="290.4" y="477.9" fill="#fff">s…</text><text x="311.6" y="477.9" fill="#fff">t…</text><text x="354.9" y="477.9" fill="#fff">t…</text><text x="663.7" y="477.9" fill="#fff">e.render</text><text x="772.6" y="477.9" fill="#fff">e.render</text><text x="860.6" y="477.9" fill="#fff">e…</text><text x="883.6" y="477.9" fill="#fff">e.render</text><text x="1017" y="477.9" fill="#fff">e…</text><text x="1038.9" y="477.9" fill="#fff">e…</text><text x="1060.6" y="477.9" fill="#fff">e.r…der</text><text x="25.1" y="493.2" fill="#fff">a.d…ct</text><text x="136.2" y="493.2" fill="#fff">hC</text><text x="246.8" y="493.2" fill="#fff">(…</text><text x="268.4" y="493.2" fill="#fff">e…</text><text x="311.6" y="493.2" fill="#fff">e…</text><text x="663.7" y="493.2" fill="#fff">e._rend…dowMap</text><text x="772.8" y="493.2" fill="#fff">_mainTe…unction</text><text x="883.2" y="493.2" fill="#fff">t.render</text><text x="1017" y="493.2" fill="#fff">t…</text><text x="1038.9" y="493.2" fill="#fff">e…</text><text x="1060.6" y="493.2" fill="#fff">t.render</text><text x="42.4" y="508.5" fill="#fff">a…t</text><text x="136.2" y="508.5" fill="#fff">hz</text><text x="268.4" y="508.5" fill="#fff">(…</text><text x="311.6" y="508.5" fill="#fff">_…</text><text x="663.7" y="508.5" fill="#fff">e._rend…dowMap</text><text x="772.8" y="508.5" fill="#fff">e._rend…ubMesh</text><text x="883.2" y="508.5" fill="#fff">t…</text><text x="906.7" y="508.5" fill="#fff">t…</text><text x="929.4" y="508.5" fill="#fff">t…</text><text x="950.8" y="508.5" fill="#fff">t…</text><text x="973.4" y="508.5" fill="#fff">t.i…esh</text><text x="1038.9" y="508.5" fill="#fff">e…</text><text x="1060.6" y="508.5" fill="#fff">t…</text><text x="1082.4" y="508.5" fill="#fff">t…</text><text x="42.4" y="523.8" fill="#fff">a…t</text><text x="136.2" y="523.8" fill="#fff">Dj</text><text x="268.4" y="523.8" fill="#fff">(…</text><text x="311.6" y="523.8" fill="#fff">e…</text><text x="663.7" y="523.8" fill="#fff">e…</text><text x="685.8" y="523.8" fill="#fff">e…</text><text x="706.9" y="523.8" fill="#fff">e…</text><text x="728.6" y="523.8" fill="#fff">t…</text><text x="772.8" y="523.8" fill="#fff">e._…ady</text><text x="816.7" y="523.8" fill="#fff">t._bind</text><text x="883.2" y="523.8" fill="#fff">e…</text><text x="906.7" y="523.8" fill="#fff">t…</text><text x="950.8" y="523.8" fill="#fff">e…</text><text x="1038.9" y="523.8" fill="#fff">e…</text><text x="1060.6" y="523.8" fill="#fff">e…</text><text x="1082.4" y="523.8" fill="#fff">e…</text><text x="42.4" y="539.1" fill="#fff">e…</text><text x="311.6" y="539.1" fill="#fff">t…</text><text x="663.7" y="539.1" fill="#fff">e…</text><text x="816.7" y="539.1" fill="#fff">e._bind</text><text x="883.2" y="539.1" fill="#fff">e…</text><text x="906.7" y="539.1" fill="#fff">e…</text><text x="1038.9" y="539.1" fill="#fff">d…</text><text x="1082.4" y="539.1" fill="#fff">t…</text><text x="136.2" y="554.4" fill="#fff">rE</text><text x="311.6" y="554.4" fill="#fff">t…</text><text x="816.7" y="554.4" fill="#fff">e.b…ect</text><text x="883.2" y="554.4" fill="#fff">b…</text><text x="136.2" y="569.7" fill="#fff">AE</text><text x="311.6" y="569.7" fill="#fff">e…</text><text x="816.7" y="569.7" fill="#fff">bin…ray</text><text x="136.2" y="585" fill="#fff">lb</text><text x="311.6" y="585" fill="#fff">e…</text><text x="136.2" y="615.6" fill="#fff">SI</text><text x="136.2" y="630.9" fill="#fff">PI</text><text x="136.2" y="646.2" fill="#fff">PK</text><text x="136.2" y="661.5" fill="#fff">Bg</text><text x="136.2" y="676.8" fill="#fff">il</text><text x="136.2" y="692.1" fill="#fff">dl</text><text x="136.2" y="707.4" fill="#fff">_k</text><text x="136.2" y="722.7" fill="#fff">HE</text><text x="136.2" y="738" fill="#fff">sk</text><text x="136.2" y="753.3" fill="#fff">tk</text><text x="136.2" y="768.6" fill="#fff">Za</text><text x="136.2" y="783.9" fill="#fff">PE</text></g>
<g><rect x="35.25" y="108" width="1" height="742" fill="#000" fill-opacity="0.06"/><rect x="115.9" y="108" width="1" height="742" fill="#000" fill-opacity="0.06"/><rect x="196.55" y="108" width="1" height="742" fill="#000" fill-opacity="0.06"/><rect x="277.2" y="108" width="1" height="742" fill="#000" fill-opacity="0.06"/><rect x="357.85" y="108" width="1" height="742" fill="#000" fill-opacity="0.06"/><rect x="438.5" y="108" width="1" height="742" fill="#000" fill-opacity="0.06"/><rect x="519.15" y="108" width="1" height="742" fill="#000" fill-opacity="0.06"/><rect x="599.8" y="108" width="1" height="742" fill="#000" fill-opacity="0.06"/><rect x="680.45" y="108" width="1" height="742" fill="#000" fill-opacity="0.06"/><rect x="761.1" y="108" width="1" height="742" fill="#000" fill-opacity="0.06"/><rect x="841.75" y="108" width="1" height="742" fill="#000" fill-opacity="0.06"/><rect x="922.4" y="108" width="1" height="742" fill="#000" fill-opacity="0.06"/><rect x="1003.05" y="108" width="1" height="742" fill="#000" fill-opacity="0.06"/><rect x="1083.7" y="108" width="1" height="742" fill="#000" fill-opacity="0.06"/></g>
</svg>
<!-- tooltip -->
<div class="a" style="left:370.9px;top:428.2px;width:177.5px;height:22px;background:#fff;box-shadow:0 1px 3px rgba(0,0,0,0.25);border-radius:1px"></div>
<span class="a" style="left:379.4px;top:433px;font-size:10.8px;line-height:13px;color:#1e8a3c;white-space:nowrap">1.61 毫秒</span>
<span class="a" style="left:430.4px;top:433px;font-size:10.8px;line-height:13px;color:#333;white-space:nowrap">t.computeWorldMatrix</span>
</body></html>
